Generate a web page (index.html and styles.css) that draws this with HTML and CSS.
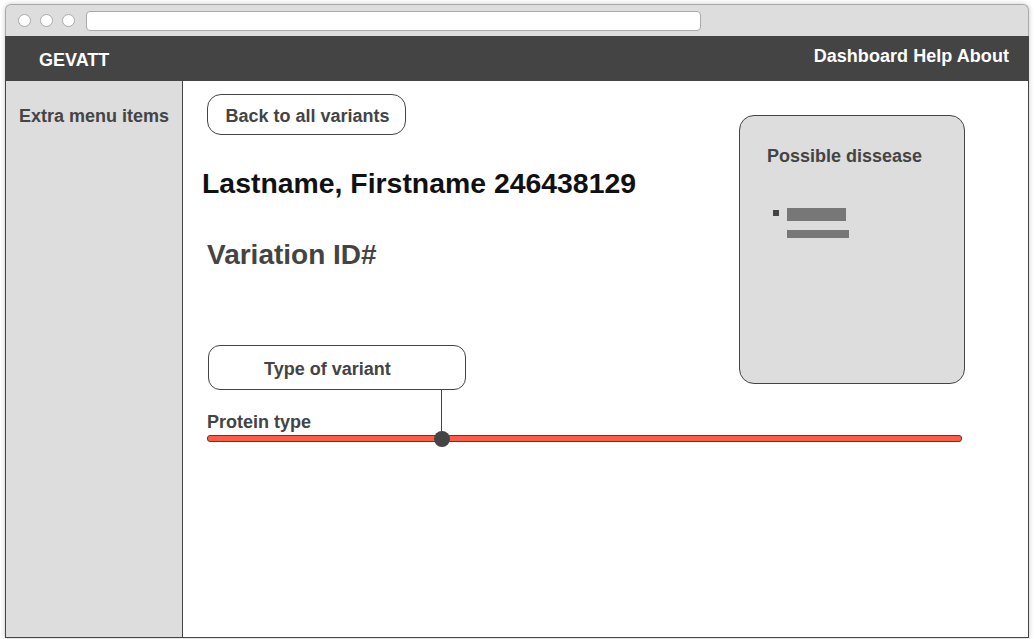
FILE: index.html
```html
<!DOCTYPE html>
<html lang="en">
<head>
<meta charset="utf-8">
<title>GEVATT - Variant</title>
<link rel="stylesheet" href="styles.css">
</head>
<body>
<div class="window">
  <div class="chrome">
    <span class="dot"></span>
    <span class="dot"></span>
    <span class="dot"></span>
    <div class="address"></div>
  </div>
  <header class="topbar">
    <div class="brand">GEVATT</div>
    <nav class="nav"><a>Dashboard</a> <a>Help</a> <a>About</a></nav>
  </header>
  <div class="main">
    <aside class="sidebar">Extra menu items</aside>
    <section class="content">
      <div class="row">
        <div class="left">
          <button class="back">Back to all variants</button>
          <h1 class="patient">Lastname, Firstname 246438129</h1>
          <h2 class="variation">Variation ID#</h2>
          <div class="type-box">Type of variant<span class="connector"></span></div>
          <div class="protein-label">Protein type</div>
        </div>
        <div class="card">
          <div class="card-title">Possible dissease</div>
          <div class="bullet-item">
            <span class="bullet"></span>
            <div class="bars">
              <span class="bar bar-a"></span>
              <span class="bar bar-b"></span>
            </div>
          </div>
        </div>
      </div>
      <div class="slider"><span class="knob"></span></div>
    </section>
  </div>
</div>
</body>
</html>
```

FILE: styles.css
```css
* { box-sizing: border-box; }

html, body {
  margin: 0;
  padding: 0;
  background: #ffffff;
}

body {
  font-family: "Liberation Sans", Arial, sans-serif;
  font-weight: bold;
  font-size: 18px;
  line-height: 20px;
  color: #444444;
  width: 1035px;
  height: 639px;
  overflow: hidden;
}

.window {
  margin: 4px 0 0 5px;
  width: 1024px;
  height: 634px;
  display: flex;
  flex-direction: column;
  box-shadow: 0 0 5px rgba(0, 0, 0, 0.22);
  border-radius: 6px 6px 0 0;
}

.chrome {
  height: 32px;
  flex: none;
  background: #dddddd;
  border: 1px solid #a9a9a9;
  border-bottom: none;
  border-radius: 6px 6px 0 0;
  display: flex;
  align-items: center;
  padding-left: 12px;
  gap: 9px;
}

.dot {
  width: 13px;
  height: 13px;
  border-radius: 50%;
  background: #ffffff;
  border: 1px solid #aaaaaa;
  flex: none;
}

.address {
  margin-left: 2px;
  width: 615px;
  height: 20px;
  background: #ffffff;
  border: 1px solid #aaaaaa;
  border-radius: 4px;
}

.topbar {
  height: 45px;
  flex: none;
  background: #444444;
  color: #ffffff;
  display: flex;
  justify-content: space-between;
  align-items: flex-start;
}

.brand {
  padding: 14px 0 0 34px;
}

.nav {
  padding: 10px 20px 0 0;
  letter-spacing: 0.05px;
}

.nav a {
  color: #ffffff;
  text-decoration: none;
}

.main {
  flex: 1;
  display: flex;
  border: 1px solid #444444;
  border-top: none;
}

.sidebar {
  width: 177px;
  flex: none;
  background: #dddddd;
  border-right: 1px solid #444444;
  padding: 25px 0 0 13px;
}

.content {
  flex: 1;
  padding: 13px 63px 0 24px;
}

.row {
  display: flex;
  justify-content: space-between;
  align-items: flex-start;
}

.left {
  display: flex;
  flex-direction: column;
  align-items: flex-start;
}

.back {
  width: 199px;
  height: 41px;
  border: 1px solid #444444;
  border-radius: 14px;
  background: #ffffff;
  font: inherit;
  color: #444444;
  padding: 2px 0 0 2px;
  line-height: 20px;
}

.patient {
  margin: 32px 0 0 -5px;
  font-size: 28.4px;
  line-height: 32px;
  color: #111111;
}

.variation {
  margin: 40px 0 0 0;
  font-size: 28px;
  line-height: 32px;
  color: #444444;
}

.type-box {
  position: relative;
  margin: 74px 0 0 1px;
  width: 258px;
  height: 45px;
  border: 1px solid #444444;
  border-radius: 12px;
  padding: 13px 0 0 55px;
}

.connector {
  position: absolute;
  left: 232px;
  top: 100%;
  width: 1px;
  height: 48px;
  background: #444444;
}

.protein-label {
  margin-top: 22px;
}

.card {
  margin-top: 21px;
  width: 226px;
  height: 269px;
  background: #dddddd;
  border: 1px solid #444444;
  border-radius: 15px;
  padding: 30px 0 0 27px;
}

.card-title {
  line-height: 20px;
}

.bullet-item {
  margin: 42px 0 0 6px;
  display: flex;
  align-items: flex-start;
  gap: 8px;
}

.bullet {
  width: 6px;
  height: 6px;
  background: #444444;
  margin-top: 2px;
}

.bars {
  display: flex;
  flex-direction: column;
  gap: 9px;
}

.bar {
  display: block;
  background: #777777;
}

.bar-a { width: 59px; height: 13px; }
.bar-b { width: 62px; height: 8px; }

.slider {
  position: relative;
  margin: 3px 3px 0 0;
  height: 7px;
  background: #ff5c45;
  border: 1px solid #444444;
  border-radius: 3px;
}

.knob {
  position: absolute;
  left: 226px;
  top: -5px;
  width: 16px;
  height: 16px;
  border-radius: 50%;
  background: #444444;
}
```
